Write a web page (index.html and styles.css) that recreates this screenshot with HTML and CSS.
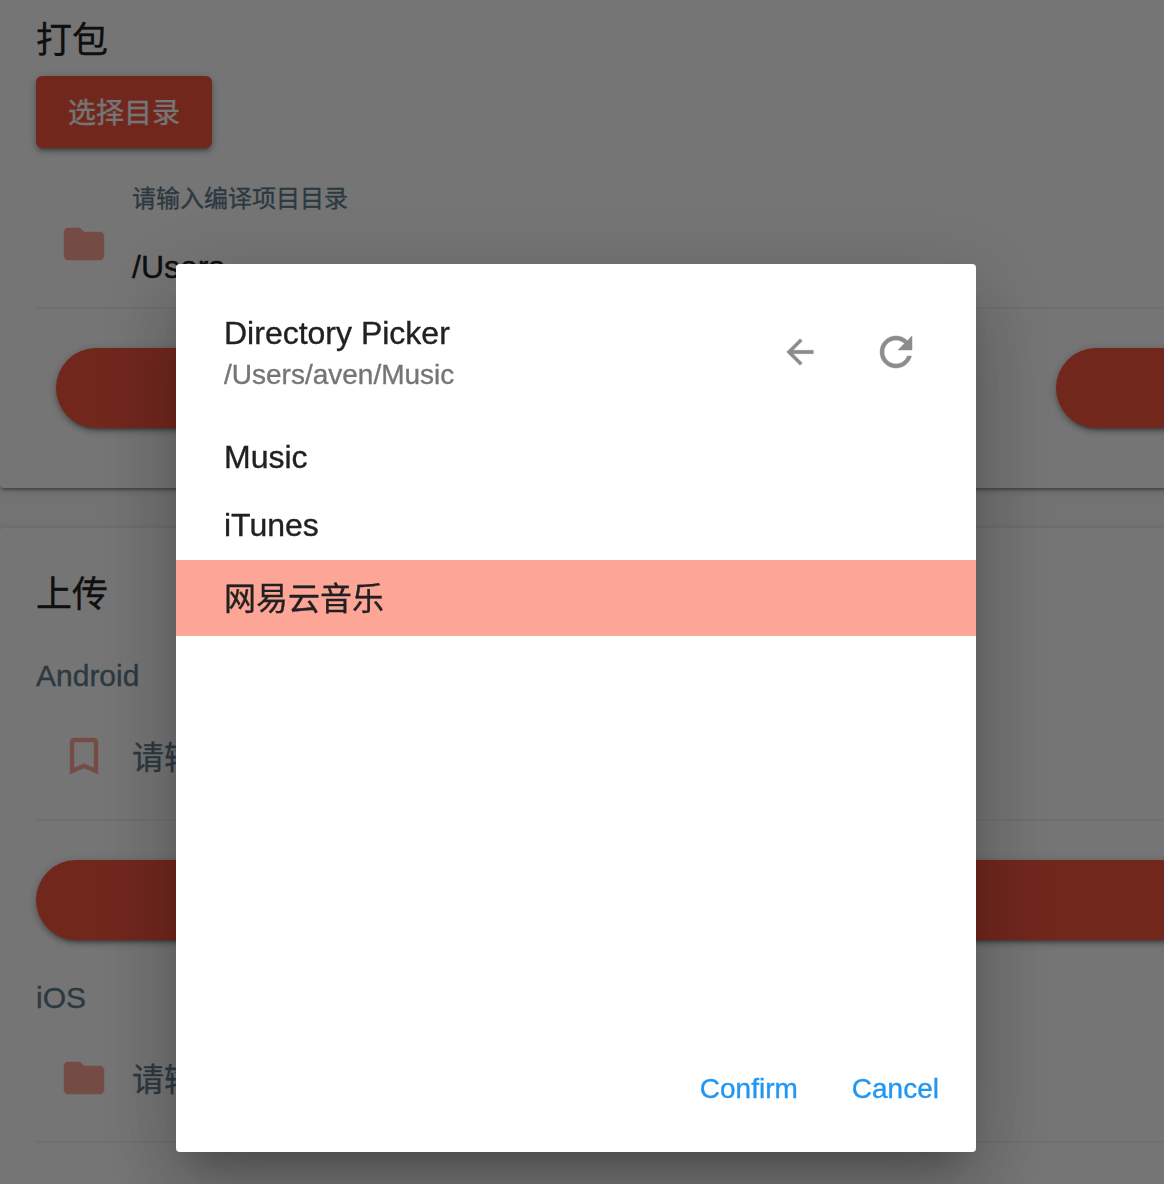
FILE: index.html
```html
<!DOCTYPE html>
<html lang="zh-CN">
<head>
<meta charset="utf-8">
<title>Directory Picker</title>
<link rel="stylesheet" href="styles.css">
</head>
<body>
<main class="page">
  <section class="card card-build">
    <h2 class="card-title">打包</h2>
    <button class="button">选择目录</button>
    <div class="field field-filled">
      <svg class="icon field-icon" viewBox="0 0 24 24"><path d="M10 4H4c-1.100 0-1.990.9-1.990 2L2 18c0 1.100.9 2 2 2h16c1.100 0 2-.9 2-2V8c0-1.100-.9-2-2-2h-8l-2-2z"/></svg>
      <div class="field-body">
        <span class="field-label">请输入编译项目目录</span>
        <span class="field-value">/Users</span>
      </div>
    </div>
    <div class="actions">
      <button class="pill pill-first" aria-label="Android"></button>
      <button class="pill pill-rest" aria-label="iOS"></button>
    </div>
  </section>
  <section class="card card-upload">
    <h2 class="card-title">上传</h2>
    <h3 class="platform">Android</h3>
    <div class="field field-empty">
      <svg class="icon field-icon" viewBox="0 0 24 24"><path d="M17 3H7c-1.100 0-1.990.9-1.990 2L5 21l7-3 7 3V5c0-1.100-.9-2-2-2zm0 15l-5-2.180L7 18V5h10v13z"/></svg>
      <span class="field-hint">请输</span>
    </div>
    <button class="pill pill-wide" aria-label="上传"></button>
    <h3 class="platform">iOS</h3>
    <div class="field field-empty">
      <svg class="icon field-icon" viewBox="0 0 24 24"><path d="M10 4H4c-1.100 0-1.990.9-1.990 2L2 18c0 1.100.9 2 2 2h16c1.100 0 2-.9 2-2V8c0-1.100-.9-2-2-2h-8l-2-2z"/></svg>
      <span class="field-hint">请输</span>
    </div>
  </section>
</main>
<div class="overlay">
  <div class="dialog" role="dialog">
    <header class="dialog-header">
      <div class="heading">
        <div class="dialog-title">Directory Picker</div>
        <div class="dialog-path">/Users/aven/Music</div>
      </div>
      <svg class="icon icon-back" viewBox="0 0 24 24"><path d="M20 11H7.830l5.590-5.590L12 4l-8 8 8 8 1.410-1.410L7.830 13H20v-2z"/></svg>
      <svg class="icon icon-refresh" viewBox="0 0 24 24"><path d="M17.650 6.350C16.200 4.900 14.210 4 12 4c-4.420 0-7.990 3.580-7.990 8s3.570 8 7.990 8c3.730 0 6.840-2.550 7.730-6h-2.080c-.82 2.330-3.040 4-5.650 4-3.310 0-6-2.690-6-6s2.690-6 6-6c1.660 0 3.140.69 4.220 1.780L13 11h7V4l-2.350 2.350z"/></svg>
    </header>
    <div class="list">
      <div class="row">Music</div>
      <div class="row">iTunes</div>
      <div class="row row-selected">网易云音乐</div>
    </div>
    <footer class="dialog-footer">
      <button class="link">Confirm</button>
      <button class="link">Cancel</button>
    </footer>
  </div>
</div>
</body>
</html>
```

FILE: styles.css
```css
* { box-sizing: border-box; }
html, body { margin: 0; height: 100%; overflow: hidden; }
body {
  background: #fafafa;
  color: #212121;
  font-family: "Liberation Sans", "Noto Sans CJK SC", sans-serif;
  -webkit-text-stroke: 0.35px currentColor;
}
button { border: 0; padding: 0; font: inherit; }
h2, h3 { margin: 0; font-weight: 400; }

.page {
  display: flex;
  flex-direction: column;
  gap: 40px;
  height: 100%;
  margin-right: -12px;
}
.card {
  background: #fff;
  padding-left: 36px;
  box-shadow: 0 4px 2px -2px rgba(0,0,0,.2), 0 2px 4px rgba(0,0,0,.14), 0 2px 8px rgba(0,0,0,.16);
}
.card-build { flex: none; height: 488px; padding-top: 15px; border-radius: 0 0 0 4px; }
.card-upload { flex: 1; padding-top: 41px; border-radius: 4px 0 0 0; }
.card-title { font-size: 36px; line-height: 52px; color: #212121; }

.button {
  display: block;
  margin-top: 9px;
  width: 176px;
  height: 72px;
  padding-bottom: 2px;
  border-radius: 6px;
  background: #f8553f;
  color: #fff;
  font-size: 28px;
  box-shadow: 0 6px 2px -4px rgba(0,0,0,.2), 0 4px 4px rgba(0,0,0,.14), 0 2px 10px rgba(0,0,0,.24);
}
.field {
  display: flex;
  gap: 24px;
  padding-left: 24px;
  border-bottom: 2px solid #f2f2f2;
}
.icon { flex: none; fill: currentColor; stroke: currentColor; stroke-width: 0.25; }
.field-icon { width: 48px; height: 48px; color: #fda597; }
.field-filled { height: 161px; padding-top: 32px; }
.field-filled .field-icon { margin-top: 40px; }
.field-body { display: flex; flex-direction: column; }
.field-label { padding-top: 1px; font-size: 24px; line-height: 36px; color: #607d8b; }
.field-value { margin-top: 32px; font-size: 32px; line-height: 36px; }
.actions { display: flex; gap: 100px; padding: 39px 0 0 20px; }
.pill {
  height: 80px;
  border-radius: 40px;
  background: #f8553f;
  box-shadow: 0 6px 2px -4px rgba(0,0,0,.2), 0 4px 4px rgba(0,0,0,.14), 0 2px 10px rgba(0,0,0,.24);
}
.pill-first { flex: none; width: 900px; }
.pill-rest { flex: 1; border-radius: 40px 0 0 40px; }
.pill-wide { display: block; width: 100%; margin: 39px 0 40px; border-radius: 40px 0 0 40px; }
.platform { font-size: 30px; line-height: 36px; color: #607d8b; }
.card-upload .card-title + .platform { margin-top: 37px; }
.field-empty { height: 127px; padding-top: 38px; }
.field-hint { padding-top: 2px; font-size: 32px; line-height: 48px; color: #607d8b; }

.overlay {
  position: fixed;
  inset: 0;
  display: flex;
  align-items: flex-start;
  padding: 264px 0 0 176px;
  background: rgba(0,0,0,.54);
}
.dialog {
  display: flex;
  flex-direction: column;
  width: 800px;
  height: 888px;
  border-radius: 4px;
  background: #fff;
  box-shadow: 0 22px 30px -14px rgba(0,0,0,.2), 0 48px 76px 6px rgba(0,0,0,.14), 0 18px 92px 16px rgba(0,0,0,.12);
}
.dialog-header {
  display: flex;
  align-items: center;
  height: 160px;
  padding: 16px 56px 0 48px;
}
.heading { flex: 1; padding-top: 3px; }
.dialog-title { font-size: 32px; line-height: 42px; }
.dialog-path { font-size: 28px; line-height: 41px; color: #757575; }
.icon-back { width: 40px; height: 40px; margin-right: 52px; color: #8c8c8c; }
.icon-refresh { width: 48px; height: 48px; color: #8c8c8c; }
.list { flex: 1; }
.row { padding-left: 48px; height: 68px; font-size: 32px; line-height: 66px; }
.row-selected { height: 76px; line-height: 79px; background: #fda698; }
.dialog-footer {
  display: flex;
  justify-content: flex-end;
  gap: 54px;
  height: 128px;
  padding: 41px 37px 0 0;
}
.link { height: 48px; background: none; color: #2196f3; font-size: 28px; line-height: 48px; }
```
